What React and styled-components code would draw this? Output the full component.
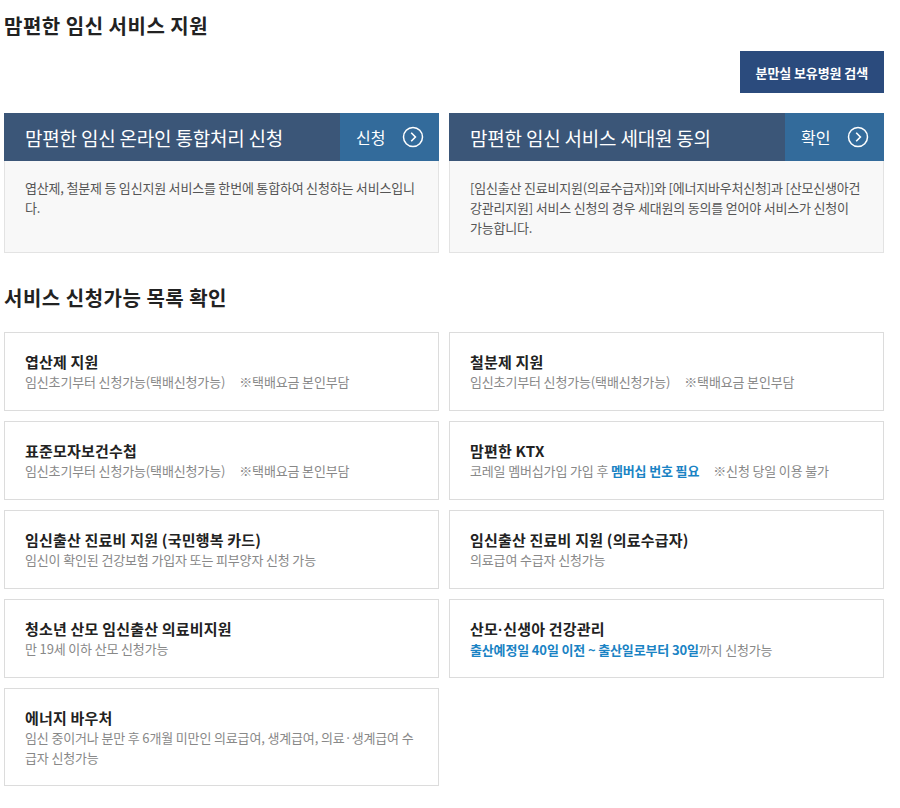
import React from 'react'
import styled, { createGlobalStyle } from 'styled-components'

const GlobalStyle = createGlobalStyle`
  body {
    margin: 0;
    background: #fff;
    font-family: "Noto Sans CJK KR", "Noto Sans", sans-serif;
    color: #222;
  }
`

const Page = styled.div`
  width: 880px;
  padding: 14px 16px 20px 4px;
`

const Heading = styled.h2`
  margin: 0;
  font-size: 20px;
  line-height: 24px;
  font-weight: 700;
  color: #222;
  letter-spacing: 0.5px;
`

const ButtonRow = styled.div`
  display: flex;
  justify-content: flex-end;
  margin-top: 13px;
`

const SearchButton = styled.button`
  height: 42px;
  padding: 0 16px;
  border: 0;
  background: #2b4b7d;
  color: #fff;
  font-family: inherit;
  font-size: 13px;
  font-weight: 700;
  letter-spacing: -0.1px;
  cursor: pointer;
`

const TopGrid = styled.div`
  display: grid;
  grid-template-columns: 1fr 1fr;
  gap: 10px;
  margin-top: 20px;
`

const TopCard = styled.div`
  display: flex;
  flex-direction: column;
`

const CardHeader = styled.div`
  display: flex;
  height: 48px;
`

const HeaderTitle = styled.div`
  flex: 1;
  display: flex;
  align-items: center;
  padding-left: 21px;
  background: #3b5678;
  color: #fff;
  font-size: 19px;
  letter-spacing: -0.2px;
`

const HeaderAction = styled.a`
  width: 99px;
  display: flex;
  align-items: center;
  justify-content: space-between;
  padding: 0 15px 0 16px;
  box-sizing: border-box;
  background: #336b9b;
  color: #fff;
  font-size: 16px;
  text-decoration: none;
`

const CardBody = styled.div`
  height: 92px;
  box-sizing: border-box;
  padding: 17px 21px 17px 20px;
  background: #f8f8f8;
  border: 1px solid #e3e3e3;
  border-top: 0;
  font-size: 13px;
  line-height: 20px;
  color: #555;
  letter-spacing: -0.2px;
`

const SectionHeading = styled(Heading)`
  margin-top: 33px;
`

const ListGrid = styled.div`
  display: grid;
  grid-template-columns: 1fr 1fr;
  gap: 10px;
  margin-top: 22px;
`

const ListCard = styled.div`
  border: 1px solid #dcdcdc;
  padding: 19px 20px 17px;
  min-height: 41px;
`

const ListTitle = styled.div`
  font-size: 15px;
  line-height: 20px;
  font-weight: 700;
  color: #222;
  letter-spacing: 0.2px;
`

const ListDesc = styled.div`
  font-size: 13px;
  line-height: 20px;
  color: #888;
  letter-spacing: -0.15px;
`

const Note = styled.span`
  margin-left: 14px;
`

const Strong = styled.b`
  color: #1a83c4;
  font-weight: 700;
`

const Dot = styled.span`
  font-family: "Liberation Sans", sans-serif;
`

const ArrowCircle = () => (
  <svg width="22" height="22" viewBox="0 0 22 22" fill="none">
    <circle cx="11" cy="11" r="9.5" stroke="#fff" strokeWidth="1.5" />
    <path d="M9.2 6.8 L13.4 11 L9.2 15.2" stroke="#fff" strokeWidth="1.6" />
  </svg>
)

const services = [
  { title: '엽산제 지원', desc: '임신초기부터 신청가능(택배신청가능)', note: '※택배요금 본인부담' },
  { title: '철분제 지원', desc: '임신초기부터 신청가능(택배신청가능)', note: '※택배요금 본인부담' },
  { title: '표준모자보건수첩', desc: '임신초기부터 신청가능(택배신청가능)', note: '※택배요금 본인부담' },
  {
    title: '맘편한 KTX',
    desc: (
      <>
        코레일 멤버십가입 가입 후 <Strong>멤버십 번호 필요</Strong>
      </>
    ),
    note: '※신청 당일 이용 불가',
  },
  { title: '임신출산 진료비 지원 (국민행복 카드)', desc: '임신이 확인된 건강보험 가입자 또는 피부양자 신청 가능' },
  { title: '임신출산 진료비 지원 (의료수급자)', desc: '의료급여 수급자 신청가능' },
  { title: '청소년 산모 임신출산 의료비지원', desc: '만 19세 이하 산모 신청가능' },
  {
    title: (
      <>
        산모<Dot>·</Dot>신생아 건강관리
      </>
    ),
    desc: (
      <>
        <Strong>출산예정일 40일 이전 ~ 출산일로부터 30일</Strong>까지 신청가능
      </>
    ),
  },
  {
    title: '에너지 바우처',
    desc: '임신 중이거나 분만 후 6개월 미만인 의료급여, 생계급여, 의료·생계급여 수급자 신청가능',
  },
]

export default function App() {
  return (
    <Page>
      <GlobalStyle />
      <Heading>맘편한 임신 서비스 지원</Heading>
      <ButtonRow>
        <SearchButton>분만실 보유병원 검색</SearchButton>
      </ButtonRow>

      <TopGrid>
        <TopCard>
          <CardHeader>
            <HeaderTitle>맘편한 임신 온라인 통합처리 신청</HeaderTitle>
            <HeaderAction href="#">
              신청
              <ArrowCircle />
            </HeaderAction>
          </CardHeader>
          <CardBody>엽산제, 철분제 등 임신지원 서비스를 한번에 통합하여 신청하는 서비스입니다.</CardBody>
        </TopCard>
        <TopCard>
          <CardHeader>
            <HeaderTitle>맘편한 임신 서비스 세대원 동의</HeaderTitle>
            <HeaderAction href="#">
              확인
              <ArrowCircle />
            </HeaderAction>
          </CardHeader>
          <CardBody>
            [임신출산 진료비지원(의료수급자)]와 [에너지바우처신청]과 [산모신생아건강관리지원] 서비스 신청의 경우 세대원의
            동의를 얻어야 서비스가 신청이 가능합니다.
          </CardBody>
        </TopCard>
      </TopGrid>

      <SectionHeading>서비스 신청가능 목록 확인</SectionHeading>
      <ListGrid>
        {services.map((s, i) => (
          <ListCard key={i}>
            <ListTitle>{s.title}</ListTitle>
            <ListDesc>
              {s.desc}
              {s.note && <Note>{s.note}</Note>}
            </ListDesc>
          </ListCard>
        ))}
      </ListGrid>
    </Page>
  )
}
